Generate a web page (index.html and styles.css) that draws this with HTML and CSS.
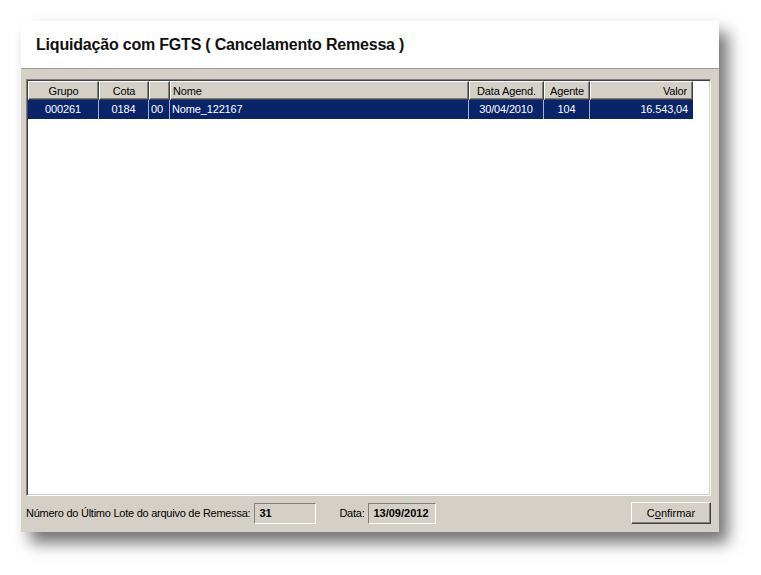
FILE: index.html
```html
<!DOCTYPE html>
<html>
<head>
<meta charset="utf-8">
<link rel="stylesheet" href="styles.css">
</head>
<body>
<div class="window">
  <div class="titlebar">
    <h1 class="title">Liquidação com FGTS ( Cancelamento Remessa )</h1>
  </div>
  <div class="content">
    <div class="grid">
      <div class="row head">
        <div class="cell c-grupo center">Grupo</div>
        <div class="cell c-cota center">Cota</div>
        <div class="cell c-dv"></div>
        <div class="cell c-nome">Nome</div>
        <div class="cell c-data center">Data Agend.</div>
        <div class="cell c-agente center">Agente</div>
        <div class="cell c-valor right">Valor</div>
      </div>
      <div class="row sel">
        <div class="cell c-grupo center">000261</div>
        <div class="cell c-cota center">0184</div>
        <div class="cell c-dv">00</div>
        <div class="cell c-nome">Nome_122167</div>
        <div class="cell c-data center">30/04/2010</div>
        <div class="cell c-agente center">104</div>
        <div class="cell c-valor right">16.543,04</div>
      </div>
    </div>
    <div class="footer">
      <span class="label">Número do Último Lote do arquivo de Remessa:</span>
      <span class="field f-lote">31</span>
      <span class="label l-data">Data:</span>
      <span class="field f-data">13/09/2012</span>
      <span class="spacer"></span>
      <button class="btn">C<u>o</u>nfirmar</button>
    </div>
  </div>
</div>
</body>
</html>
```

FILE: styles.css
```css
html, body {
  margin: 0;
  padding: 0;
  background: #ffffff;
}
body {
  padding: 21px 0 43px 21px;
  font-family: "Liberation Sans", Arial, sans-serif;
}
.window {
  width: 698px;
  height: 511px;
  display: flex;
  flex-direction: column;
  background: #d4d0c8;
  box-shadow: 9px 11px 15px rgba(0, 0, 0, 0.55);
}
.titlebar {
  background: #ffffff;
  border-bottom: 1px solid #a09c94;
  box-sizing: border-box;
  height: 48px;
  display: flex;
  align-items: center;
}
.title {
  margin: 0 0 0 15px;
  font-size: 16px;
  font-weight: bold;
  color: #111;
  letter-spacing: -0.2px;
}
.content {
  flex: 1;
  display: flex;
  flex-direction: column;
  padding: 10px 8px 0 5px;
}
.grid {
  height: 417px;
  box-sizing: border-box;
  background: #ffffff;
  border-top: 1px solid #808080;
  border-left: 1px solid #808080;
  border-right: 1px solid #ffffff;
  border-bottom: 1px solid #ffffff;
  box-shadow: inset 1px 1px 0 #404040, inset -1px -1px 0 #d4d0c8;
  padding: 1px 0 0 1px;
  font-size: 11px;
}
.row {
  display: flex;
  height: 19px;
}
.cell {
  box-sizing: border-box;
  height: 19px;
  line-height: 18px;
  padding: 0 3px;
  white-space: nowrap;
  overflow: hidden;
  letter-spacing: -0.15px;
}
.center { text-align: center; }
.right { text-align: right; }
.c-grupo { width: 71px; }
.c-cota { width: 50px; }
.c-dv { width: 21px; padding: 0 2px; }
.c-nome { width: 299px; padding: 0 2px; }
.c-data { width: 75px; }
.c-agente { width: 46px; }
.c-valor { width: 103px; padding-right: 5px; }
.head .cell {
  background: #d4d0c8;
  color: #000;
  border-top: 1px solid #ffffff;
  border-left: 1px solid #ffffff;
  border-right: 1px solid #404040;
  border-bottom: 1px solid #404040;
  box-shadow: inset -1px -1px 0 #808080;
}
.sel .cell {
  background: #0a246a;
  color: #ffffff;
  border-right: 1px solid #a6b0c8;
  line-height: 19px;
}
.sel .c-valor { border-right: none; }
.footer {
  flex: 1;
  display: flex;
  align-items: center;
  font-size: 11px;
  color: #000;
  padding-bottom: 2px;
}
.label {
  margin-right: 4px;
  letter-spacing: -0.25px;
}
.l-data {
  margin-left: 23px;
}
.field {
  box-sizing: border-box;
  height: 21px;
  line-height: 19px;
  padding: 0 4px;
  font-weight: bold;
  border-top: 1px solid #808080;
  border-left: 1px solid #808080;
  border-right: 1px solid #ffffff;
  border-bottom: 1px solid #ffffff;
}
.f-lote { width: 62px; }
.f-data { width: 68px; }
.spacer { flex: 1; }
.btn {
  width: 80px;
  height: 22px;
  box-sizing: border-box;
  background: #d4d0c8;
  font-family: "Liberation Sans", Arial, sans-serif;
  font-size: 11px;
  color: #000;
  padding: 0;
  margin: 0;
  border-top: 1px solid #ffffff;
  border-left: 1px solid #ffffff;
  border-right: 1px solid #404040;
  border-bottom: 1px solid #404040;
  box-shadow: inset -1px -1px 0 #808080;
}
```
